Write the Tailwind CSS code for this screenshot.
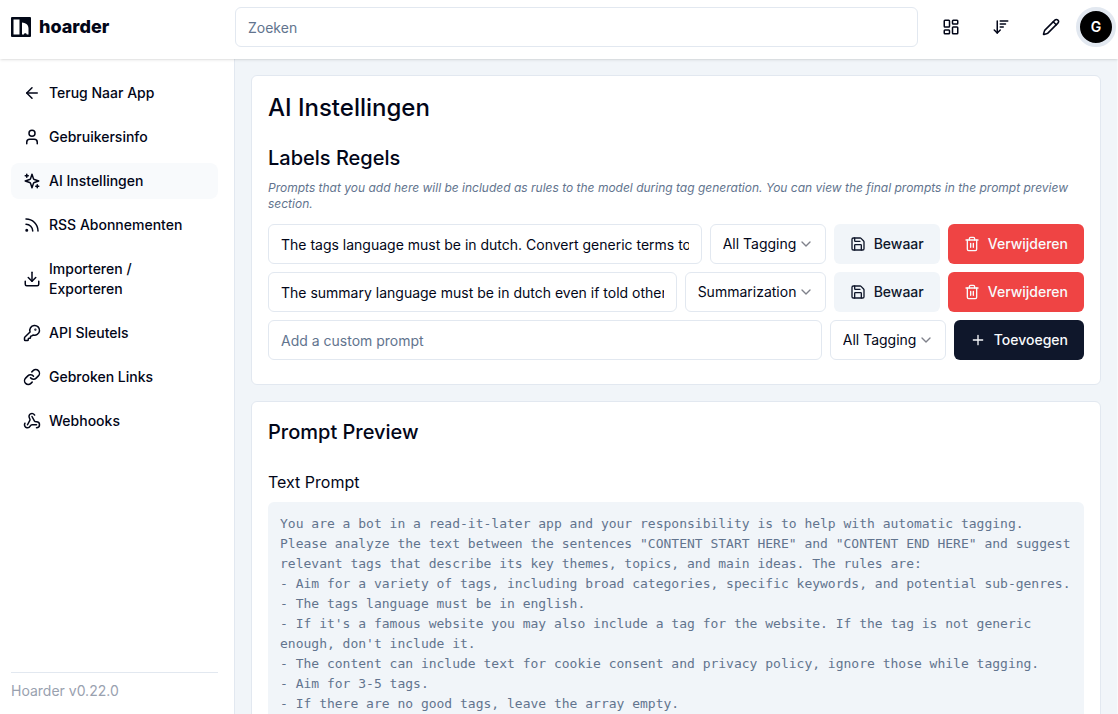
<!DOCTYPE html>
<html lang="nl">
<head>
  <meta charset="UTF-8" />
  <meta name="viewport" content="width=device-width, initial-scale=1" />
  <title>Hoarder - AI Instellingen</title>
  <script src="https://cdn.jsdelivr.net/npm/@tailwindcss/browser@4"></script>
</head>
<body class="bg-white font-['Inter',sans-serif] text-slate-950 h-screen flex flex-col overflow-hidden">

  <!-- Shared icons -->
  <svg class="hidden" aria-hidden="true">
    <symbol id="save" viewBox="0 0 24 24">
      <path d="M15.2 3a2 2 0 0 1 1.4.6l3.8 3.8a2 2 0 0 1 .6 1.4V19a2 2 0 0 1-2 2H5a2 2 0 0 1-2-2V5a2 2 0 0 1 2-2z" />
      <path d="M17 21v-7a1 1 0 0 0-1-1H8a1 1 0 0 0-1 1v7" />
      <path d="M7 3v4a1 1 0 0 0 1 1h7" />
    </symbol>
    <symbol id="trash" viewBox="0 0 24 24">
      <path d="M3 6h18" />
      <path d="M19 6v14c0 1-1 2-2 2H7c-1 0-2-1-2-2V6" />
      <path d="M8 6V4c0-1 1-2 2-2h4c1 0 2 1 2 2v2" />
      <path d="M10 11v6M14 11v6" />
    </symbol>
    <symbol id="chevron" viewBox="0 0 24 24">
      <path d="m6 9 6 6 6-6" />
    </symbol>
  </svg>

  <!-- Header -->
  <header class="relative z-10 flex items-center bg-white pt-[7px] pb-3 shadow-sm">
    <a href="#" class="flex w-[235px] shrink-0 items-center gap-2 pl-[11px]">
      <svg class="size-5" viewBox="0 0 20 20" aria-hidden="true">
        <rect width="20" height="20" rx="1" fill="#020817" />
        <path d="M2.500 2.500h6v15h-6z" fill="#fff" />
        <path d="M11 5.500c3.200.2 6.500 1.800 6.500 6v6h-1.700c-.3-1.600-2.600-1.600-3 0H11z" fill="#fff" />
      </svg>
      <span class="text-lg font-extrabold">hoarder</span>
    </a>
    <input type="text" aria-label="Zoeken" placeholder="Zoeken"
      class="h-10 min-w-0 flex-1 rounded-md border border-slate-200 px-3 text-sm placeholder:text-slate-500 focus:outline-none">
    <div class="ml-2 flex items-center">
      <button aria-label="Layout" class="flex w-[50px] justify-center">
        <svg class="size-[18px]" viewBox="0 0 24 24" fill="none" stroke="currentColor" stroke-width="2" stroke-linecap="round" stroke-linejoin="round">
          <rect width="7" height="9" x="3" y="3" rx="1" />
          <rect width="7" height="5" x="14" y="3" rx="1" />
          <rect width="7" height="9" x="14" y="12" rx="1" />
          <rect width="7" height="5" x="3" y="16" rx="1" />
        </svg>
      </button>
      <button aria-label="Sorteren" class="flex w-[50px] justify-center">
        <svg class="size-[18px]" viewBox="0 0 24 24" fill="none" stroke="currentColor" stroke-width="2" stroke-linecap="round" stroke-linejoin="round">
          <path d="m3 16 4 4 4-4" />
          <path d="M7 20V4" />
          <path d="M11 4h10M11 8h7M11 12h4" />
        </svg>
      </button>
      <button aria-label="Bewerken" class="flex w-[50px] justify-center">
        <svg class="size-[18px]" viewBox="0 0 24 24" fill="none" stroke="currentColor" stroke-width="2" stroke-linecap="round" stroke-linejoin="round">
          <path d="M21.174 6.812a1 1 0 0 0-3.986-3.987L3.842 16.174a2 2 0 0 0-.5.83l-1.321 4.352a.5.5 0 0 0 .623.622l4.353-1.320a2 2 0 0 0 .83-.497z" />
          <path d="m15 5 4 4" />
        </svg>
      </button>
      <button aria-label="Profiel" class="mr-[2px] flex size-10 items-center justify-center rounded-full border-4 border-slate-200 bg-black text-sm font-semibold text-white">G</button>
    </div>
  </header>

  <div class="flex min-h-0 flex-1">
    <!-- Sidebar -->
    <aside class="flex w-[235px] shrink-0 flex-col justify-between border-r border-slate-200 pt-4 pr-4 pb-[13px] pl-[11px]">
      <nav>
        <ul class="space-y-2 text-sm font-medium">
          <li>
            <a href="#" class="flex items-center gap-2 rounded-lg px-3 py-2 hover:bg-slate-50">
              <svg class="size-[18px] shrink-0" viewBox="0 0 24 24" fill="none" stroke="currentColor" stroke-width="2" stroke-linecap="round" stroke-linejoin="round">
                <path d="m12 19-7-7 7-7" />
                <path d="M19 12H5" />
              </svg>
              Terug Naar App
            </a>
          </li>
          <li>
            <a href="#" class="flex items-center gap-2 rounded-lg px-3 py-2 hover:bg-slate-50">
              <svg class="size-[18px] shrink-0" viewBox="0 0 24 24" fill="none" stroke="currentColor" stroke-width="2" stroke-linecap="round" stroke-linejoin="round">
                <path d="M19 21v-2a4 4 0 0 0-4-4H9a4 4 0 0 0-4 4v2" />
                <circle cx="12" cy="7" r="4" />
              </svg>
              Gebruikersinfo
            </a>
          </li>
          <li>
            <a href="#" class="flex items-center gap-2 rounded-lg bg-slate-50 px-3 py-2">
              <svg class="size-[18px] shrink-0" viewBox="0 0 24 24" fill="none" stroke="currentColor" stroke-width="2" stroke-linecap="round" stroke-linejoin="round">
                <path d="m12 3-1.912 5.813a2 2 0 0 1-1.275 1.275L3 12l5.813 1.912a2 2 0 0 1 1.275 1.275L12 21l1.912-5.813a2 2 0 0 1 1.275-1.275L21 12l-5.813-1.912a2 2 0 0 1-1.275-1.275L12 3Z" />
                <path d="M5 3v4M19 17v4M3 5h4M17 19h4" />
              </svg>
              AI Instellingen
            </a>
          </li>
          <li>
            <a href="#" class="flex items-center gap-2 rounded-lg px-3 py-2 hover:bg-slate-50">
              <svg class="size-[18px] shrink-0" viewBox="0 0 24 24" fill="none" stroke="currentColor" stroke-width="2" stroke-linecap="round" stroke-linejoin="round">
                <path d="M4 11a9 9 0 0 1 9 9" />
                <path d="M4 4a16 16 0 0 1 16 16" />
                <circle cx="5" cy="19" r="1" />
              </svg>
              RSS Abonnementen
            </a>
          </li>
          <li>
            <a href="#" class="flex items-center gap-2 rounded-lg px-3 py-2 hover:bg-slate-50">
              <svg class="size-[18px] shrink-0" viewBox="0 0 24 24" fill="none" stroke="currentColor" stroke-width="2" stroke-linecap="round" stroke-linejoin="round">
                <path d="M21 15v4a2 2 0 0 1-2 2H5a2 2 0 0 1-2-2v-4" />
                <path d="m7 10 5 5 5-5" />
                <path d="M12 15V3" />
              </svg>
              Importeren / Exporteren
            </a>
          </li>
          <li>
            <a href="#" class="flex items-center gap-2 rounded-lg px-3 py-2 hover:bg-slate-50">
              <svg class="size-[18px] shrink-0" viewBox="0 0 24 24" fill="none" stroke="currentColor" stroke-width="2" stroke-linecap="round" stroke-linejoin="round">
                <path d="M2.586 17.414A2 2 0 0 0 2 18.828V21a1 1 0 0 0 1 1h3a1 1 0 0 0 1-1v-1a1 1 0 0 1 1-1h1a1 1 0 0 0 1-1v-1a1 1 0 0 1 1-1h.172a2 2 0 0 0 1.414-.586l.814-.814a6.500 6.500 0 1 0-4-4z" />
                <circle cx="16.500" cy="7.500" r=".5" fill="currentColor" />
              </svg>
              API Sleutels
            </a>
          </li>
          <li>
            <a href="#" class="flex items-center gap-2 rounded-lg px-3 py-2 hover:bg-slate-50">
              <svg class="size-[18px] shrink-0" viewBox="0 0 24 24" fill="none" stroke="currentColor" stroke-width="2" stroke-linecap="round" stroke-linejoin="round">
                <path d="M10 13a5 5 0 0 0 7.540.540l3-3a5 5 0 0 0-7.070-7.070l-1.720 1.710" />
                <path d="M14 11a5 5 0 0 0-7.540-.540l-3 3a5 5 0 0 0 7.070 7.070l1.710-1.710" />
              </svg>
              Gebroken Links
            </a>
          </li>
          <li>
            <a href="#" class="flex items-center gap-2 rounded-lg px-3 py-2 hover:bg-slate-50">
              <svg class="size-[18px] shrink-0" viewBox="0 0 24 24" fill="none" stroke="currentColor" stroke-width="2" stroke-linecap="round" stroke-linejoin="round">
                <path d="M18 16.980h-5.990c-1.100 0-1.950.940-2.480 1.900A4 4 0 0 1 2 17c.010-.7.200-1.400.570-2" />
                <path d="m6 17 3.130-5.780c.530-.970.100-2.180-.5-3.100a4 4 0 1 1 6.890-4.060" />
                <path d="m12 6 3.130 5.730C15.660 12.700 16.900 13 18 13a4 4 0 0 1 0 8" />
              </svg>
              Webhooks
            </a>
          </li>
        </ul>
      </nav>
      <div class="border-t border-slate-200 pt-2 text-sm text-gray-400">Hoarder v0.22.0</div>
    </aside>

    <!-- Main -->
    <main class="min-w-0 flex-1 space-y-4 overflow-hidden border-r border-slate-50 bg-slate-100 p-4">

      <!-- Tagging rules -->
      <section class="rounded-md border border-slate-200 bg-white px-4 pt-4 pb-6">
        <h1 class="text-2xl font-medium">AI Instellingen</h1>
        <h2 class="mt-5 text-xl font-medium">Labels Regels</h2>
        <p class="mt-2 mb-3 text-xs text-slate-500 italic">Prompts that you add here will be included as rules to the model during tag generation. You can view the final prompts in the prompt preview section.</p>

        <div class="space-y-2 text-sm">
          <form class="flex gap-2">
            <input type="text" aria-label="Prompt 1" value="The tags language must be in dutch. Convert generic terms to dutch as well."
              class="h-10 min-w-0 flex-1 rounded-md border border-slate-200 px-3 focus:outline-none">
            <div class="relative w-[116px]">
              <select aria-label="Toepassen op 1" class="h-10 w-full appearance-none rounded-md border border-slate-200 px-3">
                <option>All Tagging</option>
                <option>Summarization</option>
              </select>
              <svg class="pointer-events-none absolute top-3 right-3 size-4 opacity-50" fill="none" stroke="currentColor" stroke-width="2" stroke-linecap="round" stroke-linejoin="round"><use href="#chevron" /></svg>
            </div>
            <button type="button" class="flex h-10 items-center gap-2 rounded-md bg-slate-100 px-4 font-medium text-slate-900">
              <svg class="size-4" fill="none" stroke="currentColor" stroke-width="2" stroke-linecap="round" stroke-linejoin="round"><use href="#save" /></svg>
              Bewaar
            </button>
            <button type="button" class="flex h-10 items-center gap-2 rounded-md bg-[#ef4444] px-4 font-medium text-slate-50">
              <svg class="size-4" fill="none" stroke="currentColor" stroke-width="2" stroke-linecap="round" stroke-linejoin="round"><use href="#trash" /></svg>
              Verwijderen
            </button>
          </form>

          <form class="flex gap-2">
            <input type="text" aria-label="Prompt 2" value="The summary language must be in dutch even if told otherwise."
              class="h-10 min-w-0 flex-1 rounded-md border border-slate-200 px-3 focus:outline-none">
            <div class="relative w-[141px]">
              <select aria-label="Toepassen op 2" class="h-10 w-full appearance-none rounded-md border border-slate-200 px-3">
                <option>All Tagging</option>
                <option selected>Summarization</option>
              </select>
              <svg class="pointer-events-none absolute top-3 right-3 size-4 opacity-50" fill="none" stroke="currentColor" stroke-width="2" stroke-linecap="round" stroke-linejoin="round"><use href="#chevron" /></svg>
            </div>
            <button type="button" class="flex h-10 items-center gap-2 rounded-md bg-slate-100 px-4 font-medium text-slate-900">
              <svg class="size-4" fill="none" stroke="currentColor" stroke-width="2" stroke-linecap="round" stroke-linejoin="round"><use href="#save" /></svg>
              Bewaar
            </button>
            <button type="button" class="flex h-10 items-center gap-2 rounded-md bg-[#ef4444] px-4 font-medium text-slate-50">
              <svg class="size-4" fill="none" stroke="currentColor" stroke-width="2" stroke-linecap="round" stroke-linejoin="round"><use href="#trash" /></svg>
              Verwijderen
            </button>
          </form>

          <form class="flex gap-2">
            <input type="text" aria-label="Nieuwe prompt" placeholder="Add a custom prompt"
              class="h-10 min-w-0 flex-1 rounded-md border border-slate-200 px-3 placeholder:text-slate-500 focus:outline-none">
            <div class="relative w-[116px]">
              <select aria-label="Toepassen op nieuwe prompt" class="h-10 w-full appearance-none rounded-md border border-slate-200 px-3">
                <option>All Tagging</option>
                <option>Summarization</option>
              </select>
              <svg class="pointer-events-none absolute top-3 right-3 size-4 opacity-50" fill="none" stroke="currentColor" stroke-width="2" stroke-linecap="round" stroke-linejoin="round"><use href="#chevron" /></svg>
            </div>
            <button type="button" class="flex h-10 items-center gap-2 rounded-md bg-slate-900 px-4 font-medium text-slate-50">
              <svg class="size-4" viewBox="0 0 24 24" fill="none" stroke="currentColor" stroke-width="2" stroke-linecap="round" stroke-linejoin="round">
                <path d="M5 12h14M12 5v14" />
              </svg>
              Toevoegen
            </button>
          </form>
        </div>
      </section>

      <!-- Prompt preview -->
      <section class="rounded-md border border-slate-200 bg-white p-4">
        <h2 class="text-xl font-medium">Prompt Preview</h2>
        <h3 class="mt-6">Text Prompt</h3>
        <pre class="mt-2 rounded-md bg-slate-100 p-3 font-['DejaVu_Sans_Mono',monospace] text-[13px] leading-5 whitespace-pre-wrap text-slate-500">You are a bot in a read-it-later app and your responsibility is to help with automatic tagging.
Please analyze the text between the sentences "CONTENT START HERE" and "CONTENT END HERE" and suggest relevant tags that describe its key themes, topics, and main ideas. The rules are:
- Aim for a variety of tags, including broad categories, specific keywords, and potential sub-genres.
- The tags language must be in english.
- If it's a famous website you may also include a tag for the website. If the tag is not generic enough, don't include it.
- The content can include text for cookie consent and privacy policy, ignore those while tagging.
- Aim for 3-5 tags.
- If there are no good tags, leave the array empty.
</pre>
      </section>
    </main>
  </div>

</body>
</html>
